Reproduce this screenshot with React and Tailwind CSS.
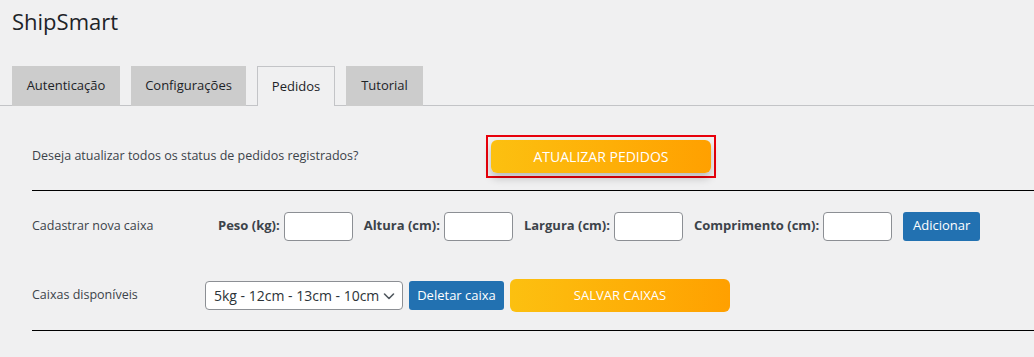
import { useState } from "react";

const Chevron = () => (
    <svg width="16" height="16" viewBox="0 0 16 16" fill="none" className="pointer-events-none absolute right-[6px] top-1/2 -translate-y-1/2">
        <path d="M3.5 6 L8 10.5 L12.5 6" stroke="#50575e" strokeWidth="1.6" strokeLinecap="round" strokeLinejoin="round" />
    </svg>
);

const App = () => {
    const [tab] = useState("Pedidos");
    const tabs = ["Autenticação", "Configurações", "Pedidos", "Tutorial"];

    const fields = [
        { label: "Peso (kg):" },
        { label: "Altura (cm):" },
        { label: "Largura (cm):" },
        { label: "Comprimento (cm):" },
    ];

    return (
        <div className="min-h-[357px] w-full bg-[#f0f0f1] font-['Open_Sans',sans-serif] text-[#3c434a] text-[12.5px]">
            {/* Header */}
            <h1 className="pl-[12px] pt-[6px] text-[22px] leading-[30px] text-[#1d2327]">ShipSmart</h1>

            {/* Tabs */}
            <div className="mt-[30px] flex gap-[11px] border-b border-[#c3c4c7] pl-[12px]">
                {tabs.map((t) => (
                    <div
                        key={t}
                        className={`-mb-px flex h-[40px] items-center justify-center text-[13px] text-[#1d2327] ${
                            t === tab ? "border border-b-0 border-[#c3c4c7] bg-[#f0f0f1]" : "bg-[#cccccc]"
                        } ${t === "Autenticação" ? "w-[108px]" : t === "Configurações" ? "w-[115px]" : t === "Pedidos" ? "w-[78px]" : "w-[77px]"}`}
                    >
                        {t}
                    </div>
                ))}
            </div>

            <div className="pl-[32px]">
                {/* Atualizar */}
                <div className="flex h-[85px] items-center border-b border-black pt-[16px]">
                    <span className="w-[454px]">Deseja atualizar todos os status de pedidos registrados?</span>
                    <span className="border-2 border-[#e8000b] p-[3px]">
                        <button className="block h-[33px] w-[220px] rounded-[6px] bg-gradient-to-r from-[#fcc010] to-[#ffa000] text-[14px] text-white shadow-[0_5px_8px_rgba(0,0,0,0.22)]">
                            ATUALIZAR PEDIDOS
                        </button>
                    </span>
                </div>

                {/* Cadastrar */}
                <div className="flex h-[70px] items-center">
                    <span className="w-[186px]">Cadastrar nova caixa</span>
                    <div className="flex items-center gap-[11px]">
                        {fields.map((f) => (
                            <label key={f.label} className="flex items-center gap-[4px] text-[13px] font-bold">
                                {f.label}
                                <input className="h-[29px] w-[69px] rounded-[4px] border border-[#8c8f94] bg-white" />
                            </label>
                        ))}
                        <button className="h-[29px] w-[77px] rounded-[3px] bg-[#2271b1] text-[13px] text-white">Adicionar</button>
                    </div>
                </div>

                {/* Caixas */}
                <div className="flex h-[70px] items-center border-b border-black">
                    <span className="w-[173px]">Caixas disponíveis</span>
                    <div className="flex items-center gap-[6px]">
                        <div className="relative">
                            <select className="h-[29px] w-[198px] appearance-none rounded-[4px] border border-[#8c8f94] bg-white pl-[8px] text-[14px] text-[#2c3338]">
                                <option>5kg - 12cm - 13cm - 10cm</option>
                            </select>
                            <Chevron />
                        </div>
                        <button className="h-[29px] w-[95px] rounded-[3px] bg-[#2271b1] text-[13px] text-white">Deletar caixa</button>
                        <button className="h-[33px] w-[220px] rounded-[6px] bg-gradient-to-r from-[#fcc010] to-[#ffa000] text-[13px] text-white">
                            SALVAR CAIXAS
                        </button>
                    </div>
                </div>
            </div>
        </div>
    );
};

export default App;
